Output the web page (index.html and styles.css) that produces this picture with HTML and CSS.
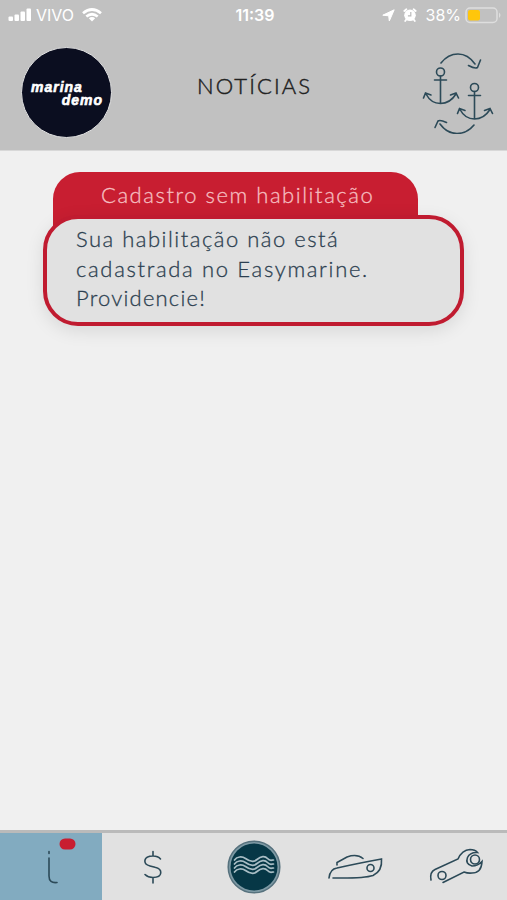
FILE: index.html
```html
<!DOCTYPE html>
<html lang="pt-BR">
<head>
<meta charset="utf-8">
<title>Notícias</title>
<link rel="stylesheet" href="styles.css">
</head>
<body>
<div class="app">
  <header class="top">
    <div class="status">
      <div class="status-left">
        <svg width="24" height="14" viewBox="0 0 24 14" fill="#fff"><rect x="0.5" y="8.500" width="4.500" height="4.500" rx="1"/><rect x="6.500" y="6.500" width="4.500" height="6.500" rx="1"/><rect x="12.500" y="3.500" width="4.500" height="9.500" rx="1"/><rect x="18.500" y="0.500" width="4.500" height="12.500" rx="1"/></svg>
        <span class="carrier">VIVO</span>
        <svg class="wifi" width="20" height="14" viewBox="0 0 20 14" fill="none" stroke="#fff" stroke-width="2.700"><path d="M1 5.300Q10-2.300 19 5.300M4.300 8.500Q10 4 15.700 8.500"/><path d="M6.800 10.300Q10 7.900 13.200 10.300L10 13.500Z" fill="#fff" stroke="none"/></svg>
      </div>
      <span class="clock">11:39</span>
      <div class="status-right">
        <svg width="13" height="13" viewBox="0 0 13 13" fill="#fff" stroke="#fff" stroke-linejoin="round"><path d="M12.200.8 7.300 12 6.700 6.800.8 6.200Z"/></svg>
        <svg class="alarm" width="14" height="14" viewBox="0 0 14 14"><circle cx="7" cy="7.300" r="5.800" fill="#fff"/><path d="M1.300 3 3.400 1.300M12.700 3 10.600 1.300M3.300 11.500 2.200 13M10.700 11.500 11.800 13" stroke="#fff" stroke-width="1.800" stroke-linecap="round"/><path d="M7.800 4V7.800H4.900" fill="none" stroke="#bbb" stroke-width="1.200"/></svg>
        <span class="percent">38%</span>
        <svg width="37" height="17" viewBox="0 0 37 17"><rect x="1" y="1" width="31" height="14.500" rx="4" fill="none" stroke="#dedede" stroke-width="1.500"/><rect x="3" y="3" width="12" height="10.500" rx="2" fill="#ffc60b"/><path d="M34 5.500Q37 8 34 11Z" fill="#dedede"/></svg>
      </div>
    </div>
    <div class="bar">
      <div class="logo"><span>marina</span><span class="logo-second">demo</span></div>
      <h1>NOTÍCIAS</h1>
      <svg class="swap" width="74" height="84" viewBox="0 0 74 84">
        <path d="M21 13Q28 4 38 4T55 14M48.500 15.500Q55 19 57.500 17.500L60.500 10M54 75Q47 83.500 37 83.500T20 74M15 77.500 18 71Q20 69.500 26.500 72.500"/>
        <g id="anchor"><circle cx="20.500" cy="22" r="4"/><path d="M20.500 26V53.500M14.500 30H26.500M6 44Q11 53.500 20.500 53.500T36 44M3.500 48 5.500 43 11 45M30.500 45 36 43 38.500 48"/></g>
        <use href="#anchor" x="34" y="15.500"/>
      </svg>
    </div>
  </header>
  <main>
    <article class="news">
      <h2>Cadastro sem habilitação</h2>
      <p><span class="line l1">Sua habilitação não está</span><span class="line l2">cadastrada no Easymarine.</span><span class="line l3">Providencie!</span></p>
    </article>
  </main>
  <nav>
    <a class="tab active"><svg width="44" height="50" viewBox="0 0 44 50"><path d="M20 9.500V11.500M20 16V34Q20 41.500 28 40.500"/><rect class="badge" x="30.500" y="-3.500" width="16" height="11" rx="5.500"/></svg></a>
    <a class="tab"><svg width="20" height="36" viewBox="0 0 20 36"><path d="M17.500 10Q15 7 10 7C0 7-.5 15 7 17L12 18.300C20 20 20 28.500 10 28.500Q5 28.500 2 25.500M10 2.500V7M10 28.500V34"/></svg></a>
    <a class="tab"><svg width="54" height="54" viewBox="0 0 54 54"><circle cx="27" cy="27" r="25.800" fill="#7e9aa5" stroke="#56717d" stroke-width="1.500"/><circle cx="27" cy="27" r="23.500" fill="#063746" stroke="none"/><g class="waves"><path id="wave" d="M7.500 20C10 16.500 15 16 18.500 18.500S26 23 30 19.500 38 15.500 40.500 18.500 44.500 20 46.500 20"/><use href="#wave" y="4"/><use href="#wave" y="8"/><use href="#wave" y="12"/></g></svg></a>
    <a class="tab"><svg width="56" height="28" viewBox="0 0 56 28"><path d="M2 25Q3 16 10 15Q30 10.500 54.500 6Q55.500 18 46 22.500Q37 25.500 6 25M10 12V9.500L20 4Q30 .5 36 5.500"/><circle cx="43.500" cy="15" r="3.500"/></svg></a>
    <a class="tab"><svg width="54" height="38" viewBox="0 0 54 38"><path d="M2 32Q.5 24 6 21.500L29 11Q33 2 41 1.500Q46 1.500 48.500 4.500Q41 4 38.500 9.500Q36 16 43 18Q49 18 53 13.500Q52.500 25 43 25Q39 25.500 35 24L14 34.500"/><circle cx="13" cy="27.500" r="4"/><circle cx="46" cy="11.500" r="4.500"/></svg></a>
  </nav>
</div>
</body>
</html>
```
FILE: styles.css
```css
* { box-sizing: border-box; }
body { margin: 0; background: #f0f0f0; font-family: Lato, "Liberation Sans", sans-serif; }
.app { height: 900px; display: flex; flex-direction: column; overflow: hidden; }
.top { height: 151px; background: #c1c1c1; border-bottom: 1px solid #d8d8d8; }
.status { height: 30px; display: grid; grid-template-columns: 1fr auto 1fr; align-items: center; padding: 0 5px 0 8px; color: #fff; font-family: Inter, sans-serif; font-size: 16px; }
.status svg { display: block; }
.status-left, .status-right { display: flex; align-items: center; }
.status-right { justify-content: flex-end; }
.carrier { margin-left: 4px; font-weight: 400; }
.wifi { margin-left: 8px; }
.clock { font-weight: 600; }
.alarm { margin: 0 9px 0 8px; }
.percent { margin-right: 4px; font-weight: 400; }
.bar { display: grid; grid-template-columns: 176px 1fr 74px; align-items: start; padding: 17px 13px 0 21px; }
.logo { width: 91px; height: 91px; border-radius: 50%; background: #0b0e20; border: 1px solid #e2e2e2; color: #fff; font: italic 700 14px/13px "Liberation Sans", sans-serif; letter-spacing: 1px; -webkit-text-stroke: .6px #fff; display: flex; flex-direction: column; padding: 33px 8px 0 9px; }
.logo-second { align-self: flex-end; }
h1 { margin: 25px 0 0; font-size: 22px; line-height: 27px; font-weight: 300; letter-spacing: 2.1px; color: #222; -webkit-text-stroke: .45px #222; }
.swap { margin-top: 3px; fill: none; stroke: #2c4a58; stroke-width: 1.6; stroke-linecap: round; }
main { flex: 1; padding: 21px 43px 0; }
.news { display: flex; flex-direction: column; }
h2 { margin: 0 46px -19px 10px; height: 62px; padding: 8px 0 0 48px; border-radius: 27px 27px 0 0; background: #c81e31; color: #f6bfc0; font-size: 22px; line-height: 29px; font-weight: 300; letter-spacing: 1.55px; white-space: nowrap; -webkit-text-stroke: .3px #f6bfc0; }
p { margin: 0; height: 111px; border: 4px solid #c01b30; border-radius: 35px; background: #e1e1e1; padding: 5px 0 0 29px; color: #2c3f50; font-size: 22px; line-height: 29.6px; font-weight: 300; box-shadow: 0 5px 18px rgba(0,0,0,.1); -webkit-text-stroke: .3px #2c3f50; }
.line { display: block; white-space: nowrap; }
.l1 { letter-spacing: 1.5px; }
.l2 { letter-spacing: 1.67px; }
.l3 { letter-spacing: 1.2px; }
nav { height: 70px; border-top: 3px solid #bababa; display: grid; grid-template-columns: 102px repeat(4, 1fr); background: #e1e1e1; }
.tab { display: flex; align-items: center; justify-content: center; }
.tab svg { fill: none; stroke: #2c4a58; stroke-width: 1.6; stroke-linecap: round; overflow: visible; }
.tab .badge { fill: #c81e31; stroke: none; }
.tab .waves { stroke: #a8bdc5; stroke-width: 1.7; }
.active { background: #82abc0; }
```
